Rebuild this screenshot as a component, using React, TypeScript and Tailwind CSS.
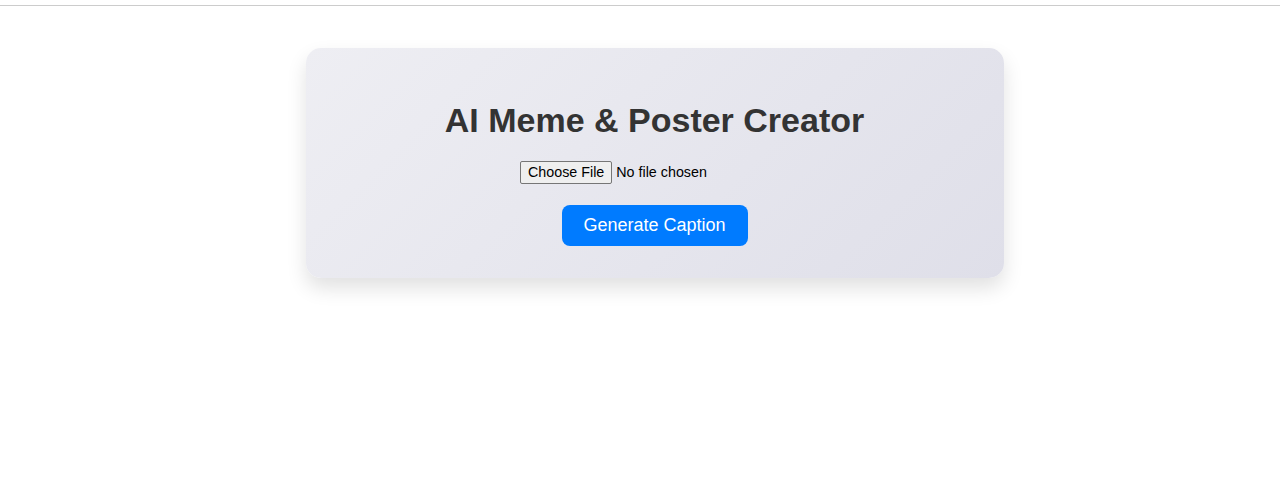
export default function App() {
  return (
    <div className="min-h-[502px] bg-white font-['Liberation_Sans',Arial,sans-serif]">
      <div className="h-[5px]" />
      <div className="border-t border-[#cccccc]" />
      <div className="flex justify-center pl-[29px] pt-[42px]">
        <div className="w-[698px] rounded-[15px] bg-[linear-gradient(135deg,#eeeef3_0%,#dfdfe9_100%)] px-[30px] pt-[30px] pb-[32px] text-center shadow-[0_10px_20px_rgba(0,0,0,0.12)]">
          <h1 className="mt-[22.5px] mb-[21.5px] text-[34px] font-bold leading-[39px] text-[#333333]">
            AI Meme &amp; Poster Creator
          </h1>
          <div className="flex justify-center">
            <input type="file" className="block w-[269px] text-[14.3px] leading-[23px] text-black file:mr-[4px] file:rounded-[2px] file:border file:border-[#767676] file:bg-[#efefef] file:px-[7px] file:py-[2px] file:text-[14.3px] file:leading-[17px] file:text-black" />
          </div>
          <div className="mt-[21px] flex justify-center">
            <button className="w-[186px] rounded-lg bg-[#007bff] py-[10px] text-lg leading-[21px] text-white">
              Generate Caption
            </button>
          </div>
        </div>
      </div>
    </div>
  );
}
